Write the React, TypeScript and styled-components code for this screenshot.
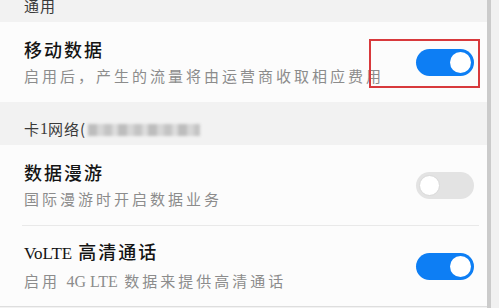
import React from "react";
import styled, { createGlobalStyle } from "styled-components";

const Global = createGlobalStyle`
  html, body { margin: 0; padding: 0; background: #f2f2f2; }
  body { width: 499px; height: 308px; overflow: hidden; }
  #root { height: 308px; }
`;

const Frame = styled.div`
  display: flex;
  height: 308px;
  font-family: "Noto Sans CJK SC", "Liberation Serif", serif;
`;

const Main = styled.div`
  width: 487px;
  display: flex;
  flex-direction: column;
  background: #f2f2f2;
`;

const EdgeBar = styled.div`
  width: 4px;
  background: #cbcbcb;
`;

const Outside = styled.div`
  flex: 1;
  background: #f1f1f1;
`;

const SectionHeader = styled.div<{ $h: number }>`
  height: ${(p) => p.$h}px;
  display: flex;
  align-items: flex-end;
  padding: 0 0 8px 24px;
  box-sizing: border-box;
  overflow: hidden;
  background: #f2f2f2;
  color: #3a3a3a;
  font-size: 15px;
  line-height: 16px;
  letter-spacing: 1px;
`;

const Blurred = styled.span`
  display: inline-block;
  width: 112px;
  height: 12px;
  margin-left: 2px;
  margin-bottom: 1px;
  background: repeating-linear-gradient(
    90deg,
    #bdbdbd 0 9px,
    #d6d6d6 9px 16px,
    #c4c4c4 16px 24px,
    #dcdcdc 24px 30px
  );
  filter: blur(1.5px);
`;

const Row = styled.div`
  position: relative;
  height: 80px;
  display: flex;
  align-items: center;
  justify-content: space-between;
  padding: 0 13px 0 24px;
  background: #fcfcfc;
`;

const TextBlock = styled.div`
  display: flex;
  flex-direction: column;
  gap: 4px;
  margin-top: -1px;
`;

const Title = styled.div`
  font-size: 18px;
  line-height: 24px;
  letter-spacing: 2px;
  font-weight: 500;
  color: #141414;
`;

const Subtitle = styled.div`
  font-size: 15px;
  line-height: 22px;
  letter-spacing: 3px;
  color: #8c8c8c;
`;

const Latin = styled.span<{ $size: number }>`
  font-family: "Liberation Serif", serif;
  font-size: ${(p) => p.$size}px;
  letter-spacing: 0;
`;

const Track = styled.div<{ $on: boolean }>`
  position: relative;
  width: 58px;
  height: 27px;
  border-radius: 14px;
  background: ${(p) => (p.$on ? "#0d7ef4" : "#e3e3e3")};
  flex-shrink: 0;
`;

const Knob = styled.div<{ $on: boolean }>`
  position: absolute;
  top: 3px;
  left: ${(p) => (p.$on ? "34px" : "3px")};
  width: 21px;
  height: 21px;
  border-radius: 50%;
  background: #ffffff;
  box-sizing: border-box;
  border: ${(p) => (p.$on ? "none" : "1px solid #d9d9d9")};
`;

const Highlight = styled.div`
  position: absolute;
  left: 369px;
  top: 17px;
  width: 111px;
  height: 49px;
  box-sizing: border-box;
  border: 2px solid #d8393c;
`;

const DividerWrap = styled.div`
  background: #fcfcfc;
  padding: 0 8px 0 22px;
`;

const Divider = styled.div`
  height: 1px;
  background: #e9e9e9;
`;

const BottomLine = styled.div`
  height: 1px;
  background: #dedede;
`;

const Toggle = ({ on }: { on: boolean }) => (
  <Track $on={on}>
    <Knob $on={on} />
  </Track>
);

export default function App() {
  return (
    <>
      <Global />
      <Frame>
        <Main>
          <SectionHeader $h={22}>通用</SectionHeader>
          <Row>
            <TextBlock>
              <Title>移动数据</Title>
              <Subtitle>启用后，产生的流量将由运营商收取相应费用</Subtitle>
            </TextBlock>
            <Toggle on />
            <Highlight />
          </Row>
          <SectionHeader $h={43}>
            卡<Latin $size={16}>1</Latin>网络(
            <Blurred />
          </SectionHeader>
          <Row>
            <TextBlock>
              <Title>数据漫游</Title>
              <Subtitle>国际漫游时开启数据业务</Subtitle>
            </TextBlock>
            <Toggle on={false} />
          </Row>
          <DividerWrap>
            <Divider />
          </DividerWrap>
          <Row>
            <TextBlock>
              <Title>
                <Latin $size={17}>VoLTE</Latin> 高清通话
              </Title>
              <Subtitle>
                启用 <Latin $size={16}>4G LTE</Latin> 数据来提供高清通话
              </Subtitle>
            </TextBlock>
            <Toggle on />
          </Row>
          <BottomLine />
        </Main>
        <EdgeBar />
        <Outside />
      </Frame>
    </>
  );
}
